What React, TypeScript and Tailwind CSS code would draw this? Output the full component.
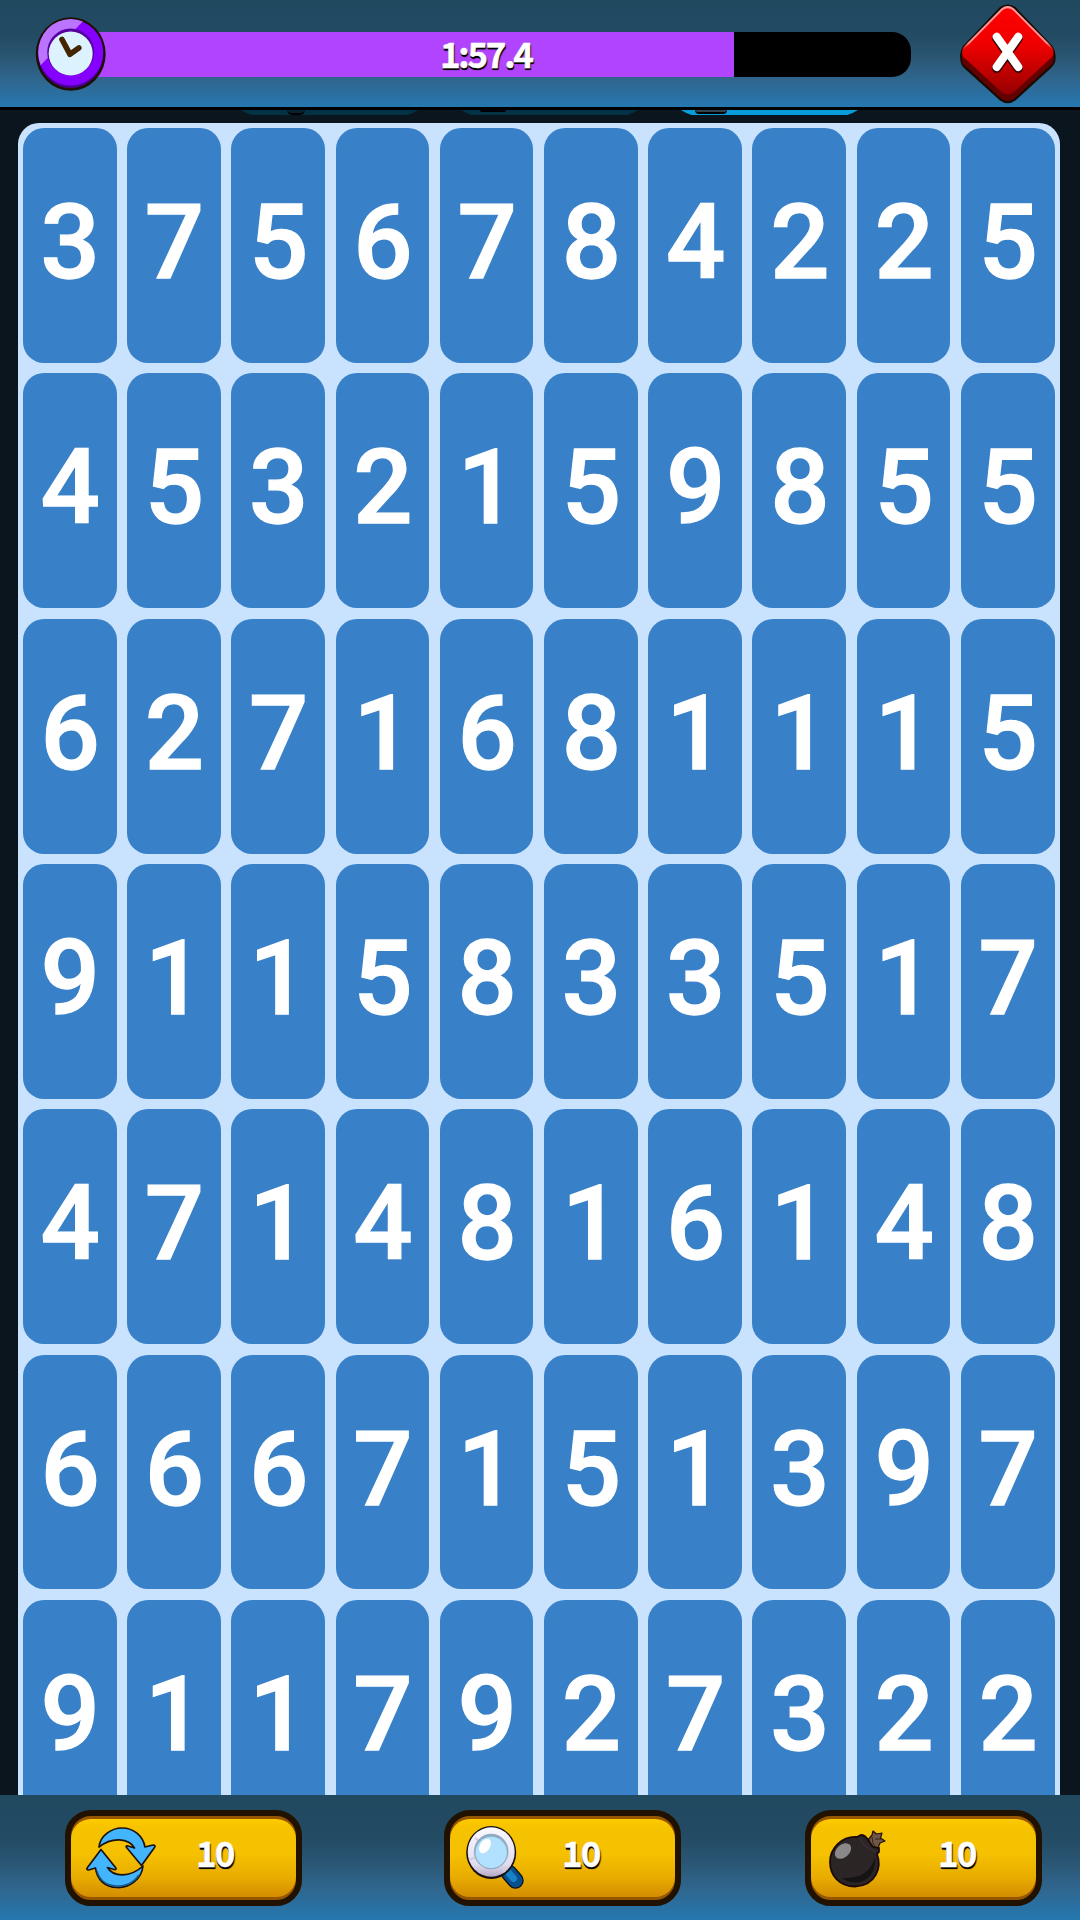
import React from "react";

const rows = [
  "3756784225",
  "4532159855",
  "6271681115",
  "9115833517",
  "4714816148",
  "6667151397",
  "9117927322",
];

const labelFont =
  "font-['Noto_Sans_CJK_JP','Noto_Sans',sans-serif] font-bold text-white [-webkit-text-stroke:0.4px_#fff] [text-shadow:1px_2px_1px_#000,0_2px_0_#111]";

function ClockIcon() {
  return (
    <svg width="72" height="76" viewBox="0 0 72 76" className="block">
      <defs>
        <clipPath id="ring">
          <ellipse cx="35.7" cy="36.5" rx="32.5" ry="33.5" />
        </clipPath>
      </defs>
      <ellipse cx="35.7" cy="38" rx="35" ry="36.7" fill="#1d1003" />
      <ellipse cx="35.7" cy="38" rx="32.5" ry="34" fill="#4b0094" />
      <ellipse cx="35.7" cy="36.5" rx="32.5" ry="33" fill="#8500ff" />
      <path d="M0 0H53L0 55Z" fill="#bb74ff" clipPath="url(#ring)" />
      <ellipse cx="35.7" cy="36" rx="23.5" ry="23.5" fill="#55009f" />
      <circle cx="35.7" cy="37.5" r="22" fill="#ddf2ff" />
      <path d="M27 23.5L35 38.3L43.8 32" fill="none" stroke="#432600" strokeWidth="5.6" strokeLinecap="round" strokeLinejoin="round" />
    </svg>
  );
}

function CloseIcon() {
  return (
    <svg width="96" height="100" viewBox="0 0 96 100" className="block">
      <defs>
        <linearGradient id="red" x1="0" y1="0" x2="0" y2="1">
          <stop offset="0" stopColor="#ff0000" />
          <stop offset=".45" stopColor="#ee0000" />
          <stop offset="1" stopColor="#960000" />
        </linearGradient>
        <linearGradient id="edge" x1="0" y1="0" x2="0" y2="1">
          <stop offset="0" stopColor="#ff9c9c" />
          <stop offset=".8" stopColor="#ff8a8a" />
          <stop offset="1" stopColor="#e00000" stopOpacity="0" />
        </linearGradient>
      </defs>
      <path d="M40 3Q47.7-2 55.4 3L92.5 42Q96.5 48 95.3 57Q95 60 91 64L55.4 96.5Q47.7 102 40 96.5L4 64Q0 60 .2 53Q-.5 47 3 42Z" fill="#160b04" />
      <path d="M41 6Q47.7 2 54.4 6L91 44Q95 50 93.5 57Q93 60 90 62L54.4 94.500Q47.7 99.500 41 94.500L5.500 62Q2 60 2 57Q1 50 4.5 44Z" fill="#630000" />
      <path d="M42 4.5Q47.7 0 53.4 4.5L91 42.5Q96 49 91 54L54 88Q47.7 93 41.4 88L4.5 54Q-.5 49 4.5 42.5Z" fill="url(#red)" />
      <path d="M3 48Q2.5 45 5.2 42.7L42 5.3Q47.7 1 53.4 5.3L90.5 42.7Q93 45 92.8 48" fill="none" stroke="url(#edge)" strokeWidth="2" />
      <path d="M36.800 34.300L58.200 64.400M58.200 34.300L36.800 64.400" stroke="#390000" strokeWidth="9.400" strokeLinecap="round" />
      <path d="M36.800 32.900L58.200 62.800M58.200 32.900L36.800 62.800" stroke="#fff" strokeWidth="8.2" strokeLinecap="round" />
    </svg>
  );
}

function RefreshIcon() {
  return (
    <svg width="70" height="62" viewBox="0 0 70 62" className="block">
      <g stroke="#1b1110" strokeWidth="1.7" strokeLinejoin="round" fill="#43b5ff">
        <path d="M13 20C14 9 25 1 36 1C48 1 57 9 59 20L67 18Q70 18 68.5 20.5L55.5 38.5L41 21Q39 18.5 42 19L48.500 21C43 11 26 9.500 13 20Z" />
        <path d="M57 39C55.500 53 43 61 31 60.500C19 60 11 53 9.500 41L2.500 43Q0 43 1.500 40.500L15 22.500L29.500 40.500Q31 43 28 42.500L21.500 40.500C27 50 44 51 57 39Z" />
      </g>
      <path d="M11 44C14 55 23 59 32 59C42 59 49 54 53 48" fill="none" stroke="#185b88" strokeWidth="1.5" />
    </svg>
  );
}

function MagnifierIcon() {
  return (
    <svg width="60" height="64" viewBox="0 0 60 64" className="block">
      <defs>
        <linearGradient id="lensRing" x1="0" y1="0" x2="0" y2="1">
          <stop offset="0" stopColor="#fbf9ff" />
          <stop offset=".75" stopColor="#e2dcef" />
          <stop offset="1" stopColor="#b5abc4" />
        </linearGradient>
      </defs>
      <path d="M43 47L49.500 54.500" stroke="#111318" strokeWidth="16.500" strokeLinecap="round" />
      <path d="M43 47L49.500 54.500" stroke="#08508d" strokeWidth="14" strokeLinecap="round" />
      <path d="M42 46L47.500 52.500" stroke="#1681c4" strokeWidth="7" strokeLinecap="round" />
      <ellipse cx="25.200" cy="26.500" rx="25" ry="26.400" fill="#161014" />
      <ellipse cx="25.200" cy="26" rx="23.500" ry="24.700" fill="url(#lensRing)" />
      <path d="M3 34L10 31M9 12L14 16M36 41L39 46" stroke="#d3cddd" strokeWidth="2" />
      <ellipse cx="25.200" cy="25.500" rx="17.300" ry="17.800" fill="#8fabc2" />
      <ellipse cx="25.200" cy="26.500" rx="15.700" ry="15.700" fill="#b1e1ff" />
      <ellipse cx="19" cy="20" rx="5" ry="8" transform="rotate(32 19 20)" fill="#fff" />
    </svg>
  );
}

function BombIcon() {
  return (
    <svg width="58" height="58" viewBox="0 0 58 58" className="block">
      <path d="M38 11L43 5L44 1L47.500 4L53 3L51.500 8L56 11L51 13L49 18L43 18Z" fill="#705848" stroke="#21120b" strokeWidth="1.200" strokeLinejoin="round" />
      <path d="M40 9Q40 14 43 17M43 7Q43 13 46 17M46 9L52 9" stroke="#33231a" fill="none" strokeWidth="1" />
      <path d="M28 7L32 5Q36 5 39 10L44 17L50 18L50 22L48 24C53 37 47 56 26 56.500C10 56.500 1 45 1 32C1 18 13 6 28 7Z" fill="#2b2526" stroke="#1b0907" strokeWidth="1.800" />
      <path d="M46 27C42 42 31 49 13 48C25 58 48 52 46 27Z" fill="#161314" />
      <path d="M31 8Q34 17 47 22" stroke="#3a3032" fill="none" strokeWidth="1.200" />
      <ellipse cx="14" cy="21" rx="9.300" ry="6.400" transform="rotate(-42 14 21)" fill="#8b8889" />
    </svg>
  );
}

function PowerButton({ icon, iconBox, labelBox }: { icon: React.ReactNode; iconBox: string; labelBox: string }) {
  return (
    <button className="h-24 w-[237px] shrink-0 rounded-[26px] border-6 border-[#211100] bg-[#965600]">
      <span className="flex h-[78px] items-start rounded-[20px] bg-[linear-gradient(#ffcb00_0%,#f6c300_10%,#f5c100_45%,#e8ac00_75%,#d48d00_100%)]">
        <span className={iconBox}>{icon}</span>
        <span className={labelBox}>
          <span className={`block text-[35px] leading-[50px] tracking-[-2px] ${labelFont}`}>10</span>
        </span>
      </span>
    </button>
  );
}

const tabShape =
  "flex h-[5px] w-[177px] [clip-path:polygon(0_0,100%_0,97%_60%,94%_100%,6%_100%,3%_60%)]";

export default function App() {
  return (
    <div className="flex h-[1920px] w-[1080px] flex-col overflow-hidden bg-[#0b151e]">
      <header className="flex h-[110px] shrink-0 items-start border-b-3 border-black bg-[linear-gradient(#20485f_0%,#234b64_35%,#2b5876_56%,#2f6790_76%,#2578b1_100%)]">
        <div className="relative mt-8 ml-[70px] flex h-[45px] w-[841px] rounded-r-[19px] bg-black">
          <div className="h-full w-[664px] bg-[#b144ff]" />
          <span className={`absolute top-[-5px] left-[370px] text-[35px] leading-[51px] tracking-[-2.3px] ${labelFont}`}>1:57.4</span>
        </div>
        <div className="relative">
          <div className="absolute top-4 left-[-876px]">
            <ClockIcon />
          </div>
        </div>
        <button className="mt-1 ml-[49px]">
          <CloseIcon />
        </button>
      </header>

      <main className="flex h-[1685px] shrink-0 flex-col overflow-hidden">
        <div className="flex h-[13px] shrink-0 items-start pl-[241px]">
          <div className={`${tabShape} bg-[#033247] pl-[46px]`}>
            <span className="h-[5px] w-[18px] rounded-b-full border-b-2 border-black bg-[#07222f]" />
          </div>
          <div className={`${tabShape} ml-[43px] bg-[#033247] pl-[19px]`}>
            <span className="h-[2px] w-[26px] rounded-b-full bg-black" />
          </div>
          <div className={`${tabShape} ml-[43px] bg-[#079cda] pl-[14px]`}>
            <span className="h-[4px] w-[32px] rounded-b-full border-b-2 border-black bg-[#31444e]" />
          </div>
        </div>
        <div className="ml-[17.5px] h-[1740px] w-[1042.5px] shrink-0 rounded-t-[21px] bg-[#c9e3ff] px-[5.3px] pt-[5.2px]">
          <div className="grid auto-rows-[234.9px] grid-cols-10 gap-x-[10.5px] gap-y-[10.4px]">
            {rows.flatMap((row, r) =>
              row.split("").map((n, c) => (
                <div key={`${r}-${c}`} className="flex items-center justify-center rounded-[21px] bg-[#3880c8] pb-[5px] pl-px">
                  <span className="block font-[Roboto,sans-serif] text-[104.5px] leading-[120px] font-medium text-white [-webkit-text-stroke:1.3px_#fff]">{n}</span>
                </div>
              )),
            )}
          </div>
        </div>
      </main>

      <footer className="flex h-[125px] shrink-0 items-start bg-[linear-gradient(#20485f_0%,#234b64_35%,#2b5876_56%,#2f6790_76%,#2578b1_100%)] pt-[15px] pl-[65px]">
        <PowerButton icon={<RefreshIcon />} iconBox="mt-2 ml-[15px] w-[70px]" labelBox="ml-[40px] mt-2" />
        <div className="w-[142px]" />
        <PowerButton icon={<MagnifierIcon />} iconBox="mt-[7px] ml-4 w-[60px]" labelBox="ml-[36px] mt-2" />
        <div className="w-[124px]" />
        <PowerButton icon={<BombIcon />} iconBox="mt-[11px] ml-[18px] w-[58px]" labelBox="ml-[51px] mt-2" />
      </footer>
    </div>
  );
}
